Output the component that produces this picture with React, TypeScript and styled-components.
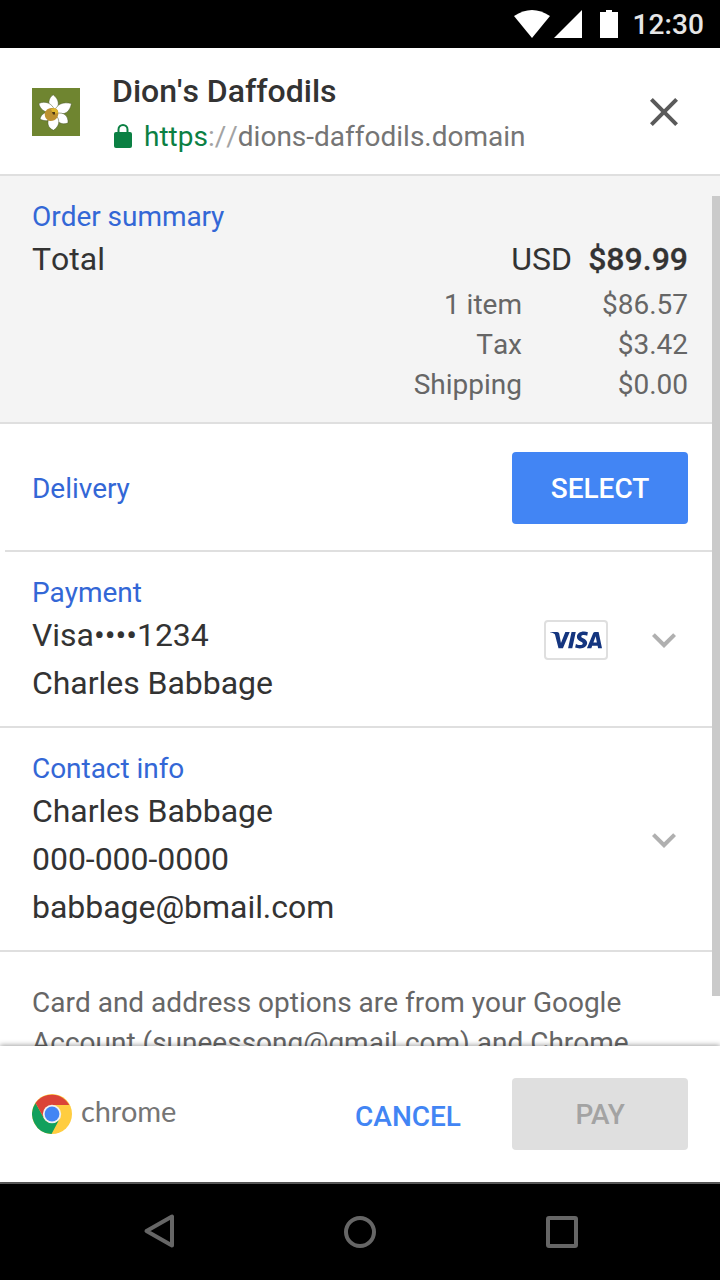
import React from "react";
import styled, { createGlobalStyle } from "styled-components";
import { SiVisa } from "react-icons/si";

const GlobalStyle = createGlobalStyle`
  *, *::before, *::after { box-sizing: border-box; }
  body { margin: 0; background: #fff; font-family: Roboto, sans-serif; font-kerning: none; }
  p, h1, h2 { margin: 0; }
  svg { display: block; flex: none; }
`;

const Screen = styled.div`
  width: 720px;
  height: 1280px;
  display: flex;
  flex-direction: column;
  overflow: hidden;
  background: #fff;
  color: #333;
`;

const StatusBar = styled.div`
  height: 48px;
  flex: none;
  display: flex;
  align-items: center;
  justify-content: flex-end;
  padding-right: 16px;
  background: #000;
`;

const Clock = styled.span`
  margin-left: 12px;
  font-size: 28px;
  line-height: 37px;
  font-weight: 500;
  letter-spacing: 0.1px;
  color: #e6e6e6;
`;

const Header = styled.header`
  height: 128px;
  flex: none;
  display: flex;
  align-items: flex-start;
  padding: 19px 32px 0;
  border-bottom: 2px solid #dfdfdf;
`;

const Merchant = styled.div`
  flex: 1;
  margin-left: 32px;
`;

const MerchantName = styled.h1`
  font-size: 32px;
  line-height: 48px;
  font-weight: 500;
`;

const Origin = styled.div`
  display: flex;
  margin-top: 3px;
  font-size: 28px;
  line-height: 37px;
  color: #757575;
`;

const Scheme = styled.span`
  margin-left: 10px;
  color: #0b8043;
`;

const Slashes = styled.span`
  color: #a3a3a3;
`;

const MerchantIcon = styled.div`
  margin-top: 21px;
`;

const IconButton = styled.button`
  margin-top: 21px;
  padding: 0;
  border: 0;
  background: none;
`;

const ScrollArea = styled.main`
  position: relative;
  flex: 1;
  min-height: 0;
  overflow: hidden;
`;

const ScrollThumb = styled.div`
  position: absolute;
  top: 20px;
  right: 0;
  width: 8px;
  height: 800px;
  background: #cacaca;
`;

const Divider = styled.div<{ $inset?: number }>`
  height: 2px;
  margin: 0 8px 0 ${(p) => p.$inset ?? 0}px;
  background: #dfdfdf;
`;

const Summary = styled.section`
  padding: 22px 32px 18px;
  background: #f4f4f4;
`;

const Section = styled.section`
  display: flex;
  align-items: center;
  padding: 22px 32px 19px;
`;

const DeliverySection = styled(Section)`
  justify-content: space-between;
  padding: 28px 32px 26px;
`;

const SectionBody = styled.div`
  flex: 1;
`;

const Label = styled.h2`
  font-size: 28px;
  line-height: 37px;
  font-weight: 400;
  letter-spacing: -0.04px;
  color: #3367d6;
`;

const Line = styled.p`
  font-size: 32px;
  line-height: 48px;
  letter-spacing: -0.04px;
`;

const TotalRow = styled.div`
  display: flex;
  font-size: 32px;
  line-height: 48px;
`;

const Currency = styled.span`
  margin-left: auto;
`;

const Amount = styled.span`
  width: 116px;
  text-align: right;
  font-weight: 500;
  -webkit-text-stroke: 0.3px #333;
`;

const Breakdown = styled.div`
  display: grid;
  grid-template-columns: 1fr 166px;
  row-gap: 1px;
  margin-top: 2px;
  font-size: 28px;
  line-height: 39px;
  text-align: right;
  color: #666;
`;

const Button = styled.button<{ $disabled?: boolean }>`
  width: 176px;
  height: 72px;
  padding: 0;
  border: 0;
  border-radius: 4px;
  font: 500 28px/37px Roboto, sans-serif;
  letter-spacing: ${(p) => (p.$disabled ? "-0.3px" : "0")};
  color: ${(p) => (p.$disabled ? "#a3a3a3" : "#fff")};
  background: ${(p) => (p.$disabled ? "#dfdfdf" : "#4285f4")};
`;

const TextButton = styled.button`
  margin: 4px 51px 0 auto;
  padding: 0;
  border: 0;
  background: none;
  font: 500 28px/37px Roboto, sans-serif;
  color: #4285f4;
`;

const CardBadge = styled.div`
  display: flex;
  align-items: center;
  justify-content: center;
  width: 64px;
  height: 40px;
  margin: 0 32px 1px 0;
  border: 2px solid #dfdfdf;
  border-radius: 4px;
  color: #14357f;
`;

const ChevronBox = styled.div`
  margin-bottom: 1px;
`;

const Note = styled.p`
  padding: 31px 32px 0;
  font-size: 28px;
  line-height: 40px;
  white-space: nowrap;
  color: #666;
`;

const Footer = styled.footer`
  position: relative;
  height: 136px;
  flex: none;
  display: flex;
  align-items: center;
  padding: 0 32px;
  background: #fff;
  box-shadow: 0 -1px 5px rgba(0, 0, 0, 0.36);
`;

const ChromeWord = styled.span`
  margin: -6px 0 0 9px;
  font-family: Lato, sans-serif;
  font-size: 29px;
  line-height: 36px;
  letter-spacing: -0.2px;
  color: #757575;
`;

const NavBar = styled.nav`
  height: 98px;
  flex: none;
  border-top: 2px solid #5e5e5e;
  background: #000;
`;

const NavIcons = styled.div`
  height: 96px;
  display: flex;
  align-items: center;
  justify-content: center;
  gap: 154px;
`;

const Chevron = () => (
  <ChevronBox>
    <svg width="48" height="48" viewBox="0 0 24 24" fill="#b0b0b0">
      <path d="M16.59 8.59 12 13.17 7.41 8.59 6 10l6 6 6-6z" />
    </svg>
  </ChevronBox>
);

const Daffodil = () => (
  <svg width="48" height="48" viewBox="0 0 48 48">
    <rect width="48" height="48" fill="#6f8530" />
    <g fill="#fff" stroke="#43511f" strokeWidth="0.5">
      <path d="M19.500 22C15.500 17 16 10 21.200 6.800C27 11 27.500 17 24.500 22Z" />
      <path d="M20 25C12 24.500 8 21 6.800 15.500C13 12.500 20 15 22.500 22Z" />
      <path d="M22.500 23C25 16 31 13.500 39.500 15.500C38 23.500 33 27.500 25 25.500Z" />
      <path d="M20 24C14 23 9 26 8 31C12 33.500 17 33 20 31Z" />
      <path d="M24 25.500C32 23.500 36.500 28 36 35C30 37.500 25 34 22 29Z" />
      <path d="M18 28.500C14 35 16 40 21.500 42.300C27.500 38 28 33 25 28.500Z" />
    </g>
    <path d="M15 21.500C20 19 25 20 26 23C27.500 28 24 33 18.500 33C14 32.500 12 28.500 13 24Z" fill="#bd9131" />
    <path d="M19 21C23 19 26 21 26 25L21 26Z" fill="#dfb72f" />
    <path d="M20 24h3v2.500h-2z" fill="#4d3714" />
  </svg>
);

const ChromeLogo = () => (
  <svg width="40" height="40" viewBox="0 0 40 40">
    <circle cx="20" cy="20" r="20" fill="#ffcd40" />
    <path d="M3.500 9A20 20 0 0 0 19.500 40L27.800 24.500A9 9 0 0 1 12.200 24.500Z" fill="#12a05c" />
    <path d="M3.500 9A20 20 0 0 1 37.300 11H20L12.200 24.500Z" fill="#db4437" />
    <circle cx="20" cy="20" r="9.200" fill="#f1f1f1" />
    <circle cx="20" cy="20" r="7.400" fill="#4285f4" />
  </svg>
);

export default function App() {
  return (
    <Screen>
      <GlobalStyle />
      <StatusBar>
        <svg width="106" height="28" viewBox="0 0 106 28" fill="#fff">
          <path d="M0 6Q18-6 36 6L18 28Z" />
          <path d="M68 0V28H40Z" />
          <path d="M92 0h6v2h6v26H86V2h6z" />
        </svg>
        <Clock>12:30</Clock>
      </StatusBar>

      <Header>
        <MerchantIcon>
          <Daffodil />
        </MerchantIcon>
        <Merchant>
          <MerchantName>Dion's Daffodils</MerchantName>
          <Origin>
            <svg width="22" height="37" viewBox="0 0 22 37">
              <path d="M6.500 15v-3.500a4.500 4.500 0 0 1 9 0V15" fill="none" stroke="#0b8043" strokeWidth="2" />
              <rect x="2" y="14" width="18" height="16" rx="2" fill="#0b8043" />
            </svg>
            <Scheme>https</Scheme>
            <Slashes>://</Slashes>
            <span>dions-daffodils.domain</span>
          </Origin>
        </Merchant>
        <IconButton aria-label="Close">
          <svg width="48" height="48" viewBox="0 0 24 24" fill="#5a5a5a">
            <path d="M19 6.410 17.590 5 12 10.590 6.410 5 5 6.410 10.590 12 5 17.590 6.410 19 12 13.410 17.590 19 19 17.590 13.410 12z" />
          </svg>
        </IconButton>
      </Header>

      <ScrollArea>
        <Summary>
          <Label>Order summary</Label>
          <TotalRow>
            <span>Total</span>
            <Currency>USD</Currency>
            <Amount>$89.99</Amount>
          </TotalRow>
          <Breakdown>
            <span>1 item</span>
            <span>$86.57</span>
            <span>Tax</span>
            <span>$3.42</span>
            <span>Shipping</span>
            <span>$0.00</span>
          </Breakdown>
        </Summary>
        <Divider />
        <DeliverySection>
          <Label>Delivery</Label>
          <Button>SELECT</Button>
        </DeliverySection>
        <Divider $inset={5} />
        <Section>
          <SectionBody>
            <Label>Payment</Label>
            <Line>Visa••••1234</Line>
            <Line>Charles Babbage</Line>
          </SectionBody>
          <CardBadge>
            <SiVisa size={52} />
          </CardBadge>
          <Chevron />
        </Section>
        <Divider />
        <Section>
          <SectionBody>
            <Label>Contact info</Label>
            <Line>Charles Babbage</Line>
            <Line>000-000-0000</Line>
            <Line>babbage@bmail.com</Line>
          </SectionBody>
          <Chevron />
        </Section>
        <Divider />
        <Note>
          Card and address options are from your Google
          <br />
          Account (suneessong@gmail.com) and Chrome
        </Note>
        <ScrollThumb />
      </ScrollArea>

      <Footer>
        <ChromeLogo />
        <ChromeWord>chrome</ChromeWord>
        <TextButton>CANCEL</TextButton>
        <Button $disabled>PAY</Button>
      </Footer>

      <NavBar>
        <NavIcons>
          <svg width="48" height="48" viewBox="0 0 48 48" fill="none" stroke="#666" strokeWidth="4" strokeLinejoin="round">
            <path d="M38 8.500V37.500L12.500 23Z" />
          </svg>
          <svg width="48" height="48" viewBox="0 0 48 48" fill="none" stroke="#666" strokeWidth="4">
            <circle cx="24" cy="24" r="14" />
          </svg>
          <svg width="48" height="48" viewBox="0 0 48 48" fill="none" stroke="#666" strokeWidth="4" strokeLinejoin="round">
            <rect x="10" y="10" width="28" height="28" rx="1" />
          </svg>
        </NavIcons>
      </NavBar>
    </Screen>
  );
}
